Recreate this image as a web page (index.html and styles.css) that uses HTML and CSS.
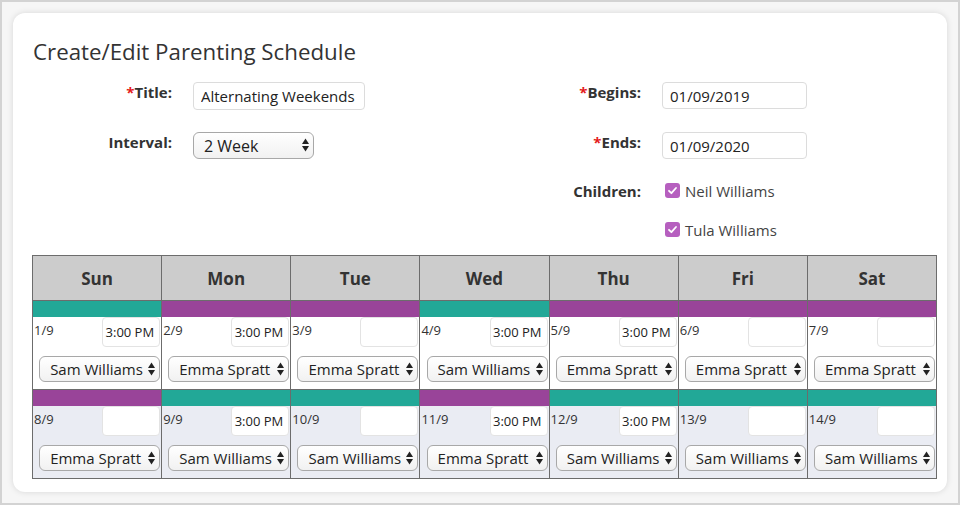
FILE: index.html
```html
<!DOCTYPE html>
<html lang="en">
  <head>
    <meta charset="UTF-8" />
    <meta name="viewport" content="width=device-width, initial-scale=1.0" />
    <title>Create/Edit Parenting Schedule</title>
    <link rel="stylesheet" href="styles.css">
  </head>

  <body>
    <div class="frame">
      <div class="card">
        <h1 class="title">Create/Edit Parenting Schedule</h1>

        <div class="form">
          <div class="col">
            <div class="row">
              <label class="lbl"><span class="req">*</span>Title:</label>
              <input type="text" class="txt title-in" value="Alternating Weekends" />
            </div>
            <div class="row">
              <label class="lbl">Interval:</label>
              <div class="pick pick-lg">
                <select><option>2 Week</option></select>
                <svg class="arrows" width="7" height="14" viewBox="0 0 7 14"><polygon points="0,6 3.5,0.5 7,6" /><polygon points="0,8 7,8 3.5,13.5" /></svg>
              </div>
            </div>
          </div>

          <div class="col">
            <div class="row">
              <label class="lbl"><span class="req">*</span>Begins:</label>
              <input type="text" class="txt date-in" value="01/09/2019" />
            </div>
            <div class="row">
              <label class="lbl"><span class="req">*</span>Ends:</label>
              <input type="text" class="txt date-in" value="01/09/2020" />
            </div>
            <div class="row row-chk">
              <label class="lbl">Children:</label>
              <span class="chk"><svg width="15" height="15" viewBox="0 0 15 15"><path d="M4 7.8l2.4 2.4 4.6-5.2" /></svg></span>
              <span class="chk-txt">Neil Williams</span>
            </div>
            <div class="row row-chk row-last">
              <span class="lbl"></span>
              <span class="chk"><svg width="15" height="15" viewBox="0 0 15 15"><path d="M4 7.8l2.4 2.4 4.6-5.2" /></svg></span>
              <span class="chk-txt">Tula Williams</span>
            </div>
          </div>
        </div>

        <table class="cal" id="cal">
          <thead>
            <tr>
              <th>Sun</th><th>Mon</th><th>Tue</th><th>Wed</th><th>Thu</th><th>Fri</th><th>Sat</th>
            </tr>
          </thead>
          <tbody></tbody>
        </table>
      </div>
    </div>

    <script>
      // 两周数据：颜色 t=teal p=purple，时间，照看人
      var weeks = [
        [
          ["1/9", "t", "3:00 PM", "Sam Williams"],
          ["2/9", "p", "3:00 PM", "Emma Spratt"],
          ["3/9", "p", "", "Emma Spratt"],
          ["4/9", "t", "3:00 PM", "Sam Williams"],
          ["5/9", "p", "3:00 PM", "Emma Spratt"],
          ["6/9", "p", "", "Emma Spratt"],
          ["7/9", "p", "", "Emma Spratt"]
        ],
        [
          ["8/9", "p", "", "Emma Spratt"],
          ["9/9", "t", "3:00 PM", "Sam Williams"],
          ["10/9", "t", "", "Sam Williams"],
          ["11/9", "p", "3:00 PM", "Emma Spratt"],
          ["12/9", "t", "3:00 PM", "Sam Williams"],
          ["13/9", "t", "", "Sam Williams"],
          ["14/9", "t", "", "Sam Williams"]
        ]
      ];
      var arrows = '<svg class="arrows" width="7" height="14" viewBox="0 0 7 14"><polygon points="0,6 3.5,0.5 7,6" /><polygon points="0,8 7,8 3.5,13.5" /></svg>';
      var body = document.getElementById("cal").getElementsByTagName("tbody")[0];
      for (var i = 0; i < weeks.length; i++) {
        var tr = document.createElement("tr");
        if (i % 2 == 1) tr.className = "alt";
        for (var j = 0; j < weeks[i].length; j++) {
          var d = weeks[i][j];
          var td = document.createElement("td");
          td.innerHTML =
            '<div class="bar ' + d[1] + '"></div>' +
            '<div class="line"><span class="day">' + d[0] + '</span>' +
            '<input type="text" class="time" value="' + d[2] + '" /></div>' +
            '<div class="pick"><select><option>Sam Williams</option><option>Emma Spratt</option></select>' + arrows + '</div>';
          td.getElementsByTagName("select")[0].value = d[3];
          tr.appendChild(td);
        }
        body.appendChild(tr);
      }
    </script>
  </body>
</html>
```

FILE: styles.css
```css
html, body {
  margin: 0;
  padding: 0;
}
body {
  font-family: "Open Sans", "Liberation Sans", sans-serif;
  color: #333;
  background: #fff;
}

.frame {
  height: 505px;
  box-sizing: border-box;
  border: 2px solid #d3d3d3;
  padding: 11px;
  background: #f6f6f6;
}
.card {
  height: 479px;
  box-sizing: border-box;
  background: #fff;
  border-radius: 12px;
  box-shadow: 0 0 6px rgba(0, 0, 0, 0.13);
  padding: 24px 10px 0 19px;
}

.title {
  margin: 0 0 15px 1px;
  font-size: 22.3px;
  font-weight: 400;
  line-height: 30px;
  color: #333;
}

/* form */
.form {
  display: grid;
  grid-template-columns: 469px 1fr;
  height: 173px;
}
.row {
  display: flex;
  align-items: flex-start;
  height: 50px;
}
.row-chk {
  height: 39px;
}
.row-last {
  height: 34px;
}
.lbl {
  width: 140px;
  margin-right: 21px;
  text-align: right;
  font-size: 15px;
  font-weight: 700;
  line-height: 20px;
  color: #333;
}
.req {
  color: #e41b1b;
}
.txt {
  box-sizing: border-box;
  height: 28px;
  border: 1px solid #dcdcdc;
  border-radius: 4px;
  padding: 0 7px;
  font-family: "Open Sans", "Liberation Sans", sans-serif;
  font-size: 15px;
  color: #222;
  outline: none;
}
.title-in {
  width: 172px;
}
.date-in {
  width: 145px;
  height: 27px;
}
.row-chk .lbl {
  margin-top: -1px;
}
.chk {
  width: 15px;
  height: 15px;
  margin: 1px 5px 0 3px;
  border-radius: 3px;
  background: #b65fbf;
}
.chk svg {
  display: block;
}
.chk path {
  fill: none;
  stroke: #fff;
  stroke-width: 1.8;
  stroke-linecap: round;
  stroke-linejoin: round;
}
.chk-txt {
  margin-top: -1px;
  font-size: 15px;
  line-height: 20px;
  color: #444;
}

/* selects */
.pick {
  position: relative;
  width: 121px;
  height: 26px;
}
.pick select {
  -webkit-appearance: none;
  appearance: none;
  box-sizing: border-box;
  width: 100%;
  height: 100%;
  margin: 0;
  border: 1px solid #a8a8a8;
  border-radius: 6px;
  padding: 0 0 0 10px;
  background: linear-gradient(#ffffff, #f1f1f1);
  font-family: "Open Sans", "Liberation Sans", sans-serif;
  font-size: 15px;
  color: #222;
  outline: none;
}
.pick-lg {
  height: 27px;
}
.pick-lg select {
  font-size: 16px;
}
.arrows {
  position: absolute;
  right: 5px;
  top: 6px;
  pointer-events: none;
}
.arrows polygon {
  fill: #222;
}

/* calendar */
.cal {
  width: 905px;
  table-layout: fixed;
  border-collapse: collapse;
  border: 1px solid #6c6c6c;
}
.cal th {
  height: 44px;
  padding: 0;
  border: 1px solid #6c6c6c;
  background: #cccccc;
  font-size: 17px;
  font-weight: 700;
  color: #333;
}
.cal td {
  padding: 0;
  vertical-align: top;
  border: 1px solid #6c6c6c;
  background: #fff;
}
.cal .alt td {
  background: #eaecf3;
}
.bar {
  height: 16px;
}
.bar.t {
  background: #22a897;
}
.bar.p {
  background: #994499;
}
.line {
  display: flex;
  justify-content: space-between;
  align-items: flex-start;
  height: 30px;
  padding: 0 1px;
}
.day {
  margin-top: 5px;
  font-size: 13px;
  line-height: 17px;
  color: #333;
}
.time {
  box-sizing: border-box;
  width: 58px;
  height: 30px;
  border: 1px solid #e3e3e3;
  border-radius: 4px;
  padding: 0 5px 0 0;
  background: #fff;
  text-align: right;
  font-family: "Open Sans", "Liberation Sans", sans-serif;
  font-size: 13px;
  color: #222;
  outline: none;
}
.cal .pick {
  margin: 9px 1px 7px auto;
}
```
